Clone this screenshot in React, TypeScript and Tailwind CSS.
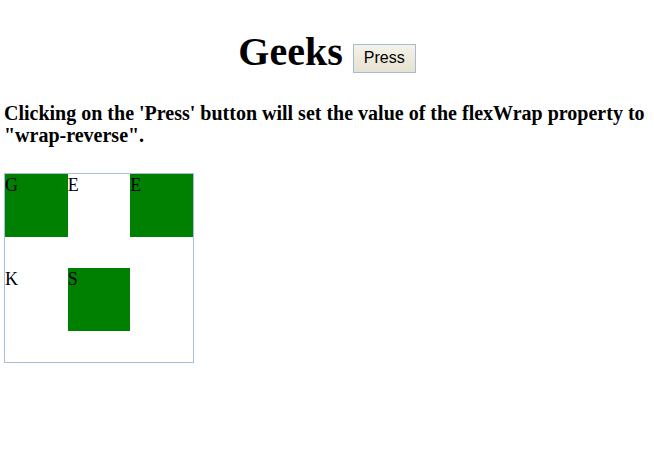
const letters = [
  { ch: "G", green: true },
  { ch: "E", green: false },
  { ch: "E", green: true },
  { ch: "K", green: false },
  { ch: "S", green: true },
];

export default function App() {
  return (
    <div className="min-h-[464px] bg-white px-[4px] pt-[29px] text-black [font-family:'Liberation_Serif',serif]">
      <div className="flex items-center justify-center gap-[10px]">
        <h1 className="text-[40px] font-bold leading-[46px]">Geeks</h1>
        <button className="mt-[12px] h-[29px] w-[63px] border border-[#a3bbd4] bg-[linear-gradient(#f4f2e8,#e6e2d0)] text-[16px] text-black [font-family:'Liberation_Sans',sans-serif]">
          Press
        </button>
      </div>

      <h3 className="mt-[27px] text-[20px] font-bold leading-[22px]">
        Clicking on the 'Press' button will set the value of the flexWrap property to "wrap-reverse".
      </h3>

      <div className="mt-[27px] flex h-[190px] w-[190px] flex-wrap content-stretch items-start border border-[#a6c0d8]">
        {letters.map((l, i) => (
          <div
            key={i}
            className={`h-[63px] w-1/3 text-[18px] leading-[22px] ${l.green ? "bg-[#008000]" : ""}`}
          >
            {l.ch}
          </div>
        ))}
      </div>
    </div>
  );
}
